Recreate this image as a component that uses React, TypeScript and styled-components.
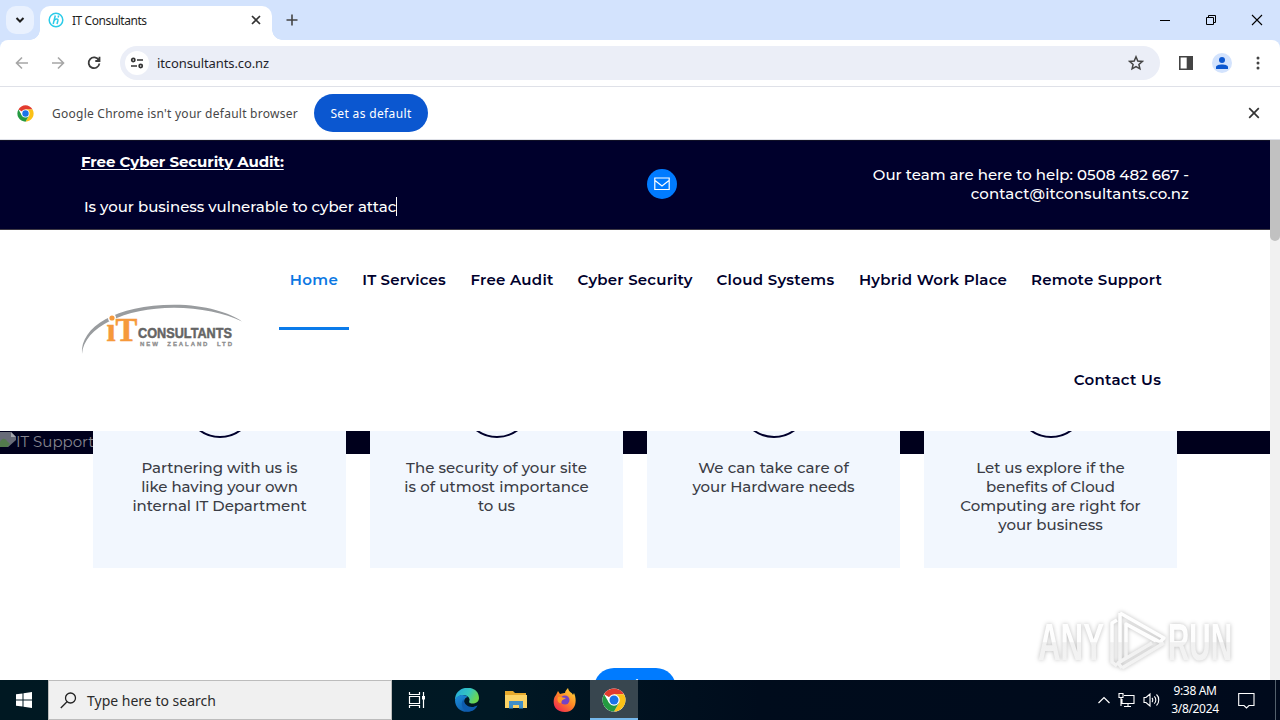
import React from "react";
import styled, { createGlobalStyle } from "styled-components";

const Global = createGlobalStyle`
  * { box-sizing: border-box; }
  html, body { margin: 0; padding: 0; }
  body { width: 1280px; height: 720px; overflow: hidden; background: #fff; }
  svg { display: block; flex: none; }
`;
const ui = `"Noto Sans", "Open Sans", sans-serif`;
const site = `"Montserrat", Inter, sans-serif`;

const Desktop = styled.div`
  width: 1280px; height: 720px; display: flex; flex-direction: column; overflow: hidden; background: #d3e3fd;
`;

/* Text run with its own tracking */
const Run = styled.span<{ $ls?: number }>`
  letter-spacing: ${(p) => p.$ls ?? 0}px; white-space: pre;
`;

/* Browser chrome */
const TabStrip = styled.div`
  height: 40px; flex: none; background: #d3e3fd; display: flex; align-items: flex-start; font-family: ${ui};
`;
const TabSearch = styled.div`
  width: 28px; height: 28px; margin: 6px 6px 0; border-radius: 10px; background: #e9f1fe;
  display: flex; align-items: center; justify-content: center;
`;
const Tab = styled.div`
  width: 232px; height: 34px; margin-top: 6px; padding: 0 11px 6px 8px; border-radius: 10px 10px 0 0; background: #fff;
  display: flex; align-items: center; font-size: 12px; color: #1f1f1f; position: relative;
  &::before, &::after { content: ""; position: absolute; bottom: 0; width: 10px; height: 10px; }
  &::before { left: -10px; background: radial-gradient(circle at 0 0, transparent 9.5px, #fff 10px); }
  &::after { right: -10px; background: radial-gradient(circle at 100% 0, transparent 9.5px, #fff 10px); }
`;
const TabTitle = styled.div`flex: 1; padding-left: 8px;`;
const NewTab = styled.div`margin: 13px 0 0 13px;`;
const WindowButtons = styled.div`
  margin-left: auto; height: 40px; display: flex; align-items: center; gap: 34px; padding-right: 17px;
`;
const Toolbar = styled.div`
  height: 47px; flex: none; background: #fff; border-bottom: 1px solid #dfe1e8; display: flex; align-items: center;
  padding: 0 14px; font-family: ${ui}; border-radius: 8px 8px 0 0;
`;
const NavButtons = styled.div`display: flex; gap: 20px; width: 106px; flex: none;`;
const AddressBar = styled.div`
  width: 1040px; height: 34px; border-radius: 17px; background: #ebeef7; display: flex; align-items: center;
  padding: 0 16px 0 5px; font-size: 13px; color: #1f1f2b;
`;
const SiteInfo = styled.div`
  width: 24px; height: 24px; border-radius: 50%; background: #fff; display: flex; align-items: center; justify-content: center;
`;
const Url = styled.div`flex: 1; padding-left: 8px;`;
const ToolbarActions = styled.div`flex: 1; display: flex; justify-content: flex-end; align-items: center; gap: 18px;`;
const Avatar = styled.div`
  width: 20px; height: 20px; border-radius: 50%; background: #d3e3fd; display: flex; align-items: center; justify-content: center;
`;
const InfoBar = styled.div`
  height: 53px; flex: none; background: #fff; border-bottom: 1px solid #dfe1e8; display: flex; align-items: center;
  padding: 0 20px 0 17px; font: 12px ${ui}; color: #474747;
`;
const InfoText = styled.div`width: 280px; padding-left: 18px;`;
const DefaultButton = styled.div`
  width: 114px; height: 38px; border-radius: 19px; background: #0b57d0; color: #fff; display: flex; align-items: center;
  justify-content: center;
`;
const InfoClose = styled.div`margin-left: auto;`;

/* Web page */
const Viewport = styled.div`height: 540px; flex: none; display: flex; overflow: hidden; font-family: ${site};`;
const Page = styled.main`width: 1270px; height: 540px; overflow: hidden; background: #fff; position: relative;`;
const Scrollbar = styled.div`width: 10px; background: #f1f1f1;`;
const Thumb = styled.div`height: 101px; background: #c1c1c1; border-radius: 0 0 5px 5px;`;
const TopBar = styled.div`
  height: 90px; background: #00002c; border-top: 1px solid #101026; border-bottom: 1px solid #3d3944; color: #fff;
  font-size: 15px; font-weight: 500; display: grid; grid-template-columns: 567px 30px 1fr; padding: 0 81px;
`;
const Audit = styled.div`padding-top: 11px; line-height: 20px;`;
const AuditTitle = styled.div`font-weight: 700; text-decoration: underline; text-decoration-thickness: 1px; text-underline-offset: 2px;`;
const AuditLine = styled.div`margin-top: 25px; padding-left: 3px; display: flex;`;
const Caret = styled.i`width: 1px; height: 19px; background: #fff;`;
const MailButton = styled.div`
  width: 30px; height: 30px; margin: 28px 0 0 -1px; border-radius: 50%; background: #007bff; display: flex; align-items: center; justify-content: center;
`;
const Contact = styled.div`padding-top: 24px; text-align: right; line-height: 19px;`;
const Header = styled.header`height: 201px; background: #fff; display: flex; padding-left: 80px;`;
const Logo = styled.div`width: 199px; padding-top: 70px;`;
const Menu = styled.nav`width: 895px; display: flex; flex-wrap: wrap; justify-content: flex-end; align-content: flex-start;`;
const MenuItem = styled.a<{ $w: number; $active?: boolean }>`
  width: ${(p) => p.$w}px; height: 100px; line-height: 100px; text-align: center; font-size: 15px; font-weight: 600;
  color: ${(p) => (p.$active ? "#0b78e3" : "#00002c")}; display: flex; flex-direction: column; padding-right: 1px;
`;
const Underline = styled.i`height: 3px; margin: -3px 0 0; background: #0b7bea;`;
const Hero = styled.div`
  height: 23px; background: #00001c; color: #85858f; font-size: 15px; line-height: 22px; display: flex; align-items: flex-start;
`;
const Cards = styled.div`
  display: grid; grid-template-columns: repeat(4, 253px); column-gap: 24px; margin: -23px 0 0 93px; position: relative;
`;
const Card = styled.section`
  height: 137px; background: #f2f7fe; overflow: hidden; display: flex; flex-direction: column; align-items: center;
  color: #3a3c45; font-size: 15px; font-weight: 500; line-height: 19px; text-align: center;
`;
const Ring = styled.div`
  width: 70px; height: 70px; flex: none; border: 2px solid #00002c; border-radius: 50%; margin: -63px 0 20px;
`;
const CallToAction = styled.div`
  width: 82px; height: 40px; margin: 100px auto 0; border-radius: 20px; background: #007bff; color: #fff; font-size: 15px;
  font-weight: 500; text-align: center; line-height: 34px;
`;
const Watermark = styled.div`
  position: absolute; left: 1034px; top: 466px;
  svg { overflow: visible; filter: drop-shadow(0 0 2px rgba(0, 0, 0, 0.26)); }
`;

/* Taskbar */
const Taskbar = styled.div`
  height: 40px; flex: none; display: flex; font-family: ${ui};
  background: linear-gradient(90deg, #001822 0, #001824 500px, #000c1c 760px, #000a1c 1280px);
`;
const Start = styled.div`width: 48px; display: flex; align-items: center; justify-content: center;`;
const SearchBox = styled.div`
  width: 344px; background: #f0f0f0; border: 1px solid #bcbcbc; display: flex; align-items: center; padding-left: 11px;
  font-size: 14px; color: #2b2b2b; gap: 10px;
`;
const AppButton = styled.div<{ $active?: boolean }>`
  width: ${(p) => (p.$active ? 48 : 49)}px; display: flex; align-items: center; justify-content: center;
  background: ${(p) => (p.$active ? "#38464f" : "transparent")}; margin-left: ${(p) => (p.$active ? 1 : 0)}px;
  border-bottom: ${(p) => (p.$active ? "2px solid #76b9ed" : "none")}; padding-top: ${(p) => (p.$active ? 2 : 0)}px;
  &:nth-child(3) { margin-right: 1px; }
`;
const Tray = styled.div`margin-left: auto; display: flex; align-items: center; color: #fff;`;
const TrayIcons = styled.div`display: flex; align-items: center; gap: 8px;`;
const Clock = styled.div`width: 70px; font-size: 12px; line-height: 18px; text-align: center; margin-right: 8px;`;
const ShowDesktop = styled.i`width: 5px; height: 40px; margin-left: 20px; border-left: 1px solid #53606c;`;

const ChromeLogo = ({ size }: { size: number }) => (
  <svg width={size} height={size} viewBox="0 0 48 48">
    <circle cx="24" cy="24" r="23" fill="#fff" />
    <path d="M24 24L4.1 12.5A23 23 0 0 1 43.9 12.5H24Z" fill="#e33b2e" />
    <path d="M43.9 12.5A23 23 0 0 1 24 47L34 29.7 24 12.5Z" fill="#fbc116" />
    <path d="M4.1 12.5A23 23 0 0 0 24 47L34 29.7 14 29.7Z" fill="#249a41" />
    <circle cx="24" cy="24" r="11.5" fill="#fff" />
    <circle cx="24" cy="24" r="9" fill="#1a73e8" />
  </svg>
);
const Cross = ({ size, w }: { size: number; w: number }) => (
  <svg width={size} height={size} viewBox="0 0 10 10" stroke="#333" strokeWidth={w}><path d="M1 1L9 9M9 1L1 9" /></svg>
);

const menu: { t: string; w: number; ls: number; active?: boolean }[] = [
  { t: "Home", w: 71, ls: 0.4, active: true },
  { t: "IT Services", w: 109, ls: 0.15 },
  { t: "Free Audit", w: 107, ls: 0.25 },
  { t: "Cyber Security", w: 139, ls: 0.2 },
  { t: "Cloud Systems", w: 142, ls: 0.3 },
  { t: "Hybrid Work Place", w: 173, ls: 0.22 },
  { t: "Remote Support", w: 154, ls: 0.2 },
  { t: "Contact Us", w: 112, ls: 0.3 },
];
const cards: [string, number][][] = [
  [["Partnering with us is", -0.1], ["like having your own", -0.05], ["internal IT Department", -0.05]],
  [["The security of your site", 0.05], ["is of utmost importance", 0.06], ["to us", 0]],
  [["We can take care of", 0.05], ["your Hardware needs", -0.05]],
  [["Let us explore if the", -0.05], ["benefits of Cloud", -0.05], ["Computing are right for", -0.04], ["your business", 0]],
];

export default function App() {
  return (
    <Desktop>
      <Global />
      <TabStrip>
        <TabSearch>
          <svg width="10" height="10" viewBox="0 0 10 10" fill="none" stroke="#1f1f1f" strokeWidth="2"><path d="M1.5 3L5 6.5 8.500 3" /></svg>
        </TabSearch>
        <Tab>
          <svg width="16" height="16" viewBox="0 0 16 16" fill="none" stroke="#2ccbe8">
            <circle cx="8" cy="8" r="6.800" strokeWidth="1.500" />
            <path d="M7.300 3.500L5.200 12M6.200 8.600C7.500 6.800 10.300 6.300 9.900 8.500L9 12M10.600 3.500L10.200 5.500" strokeWidth="1.500" />
          </svg>
          <TabTitle><Run $ls={-0.45}>IT Consultants</Run></TabTitle>
          <Cross size={10} w={1.700} />
        </Tab>
        <NewTab><svg width="14" height="14" viewBox="0 0 14 14" stroke="#444" strokeWidth="1.600"><path d="M7 1.500V12.500M1.500 7H12.500" /></svg></NewTab>
        <WindowButtons>
          <svg width="12" height="12" viewBox="0 0 12 12" stroke="#000"><path d="M1 6.500H11" /></svg>
          <svg width="12" height="12" viewBox="0 0 12 12" fill="none" stroke="#000"><path d="M1.500 3.500H8.500V10.500H1.500ZM3.500 3.500V1.500H10.500V8.500H8.500" /></svg>
          <svg width="12" height="12" viewBox="0 0 12 12" stroke="#000" strokeWidth="1.100"><path d="M1 1L11 11M11 1L1 11" /></svg>
        </WindowButtons>
      </TabStrip>
      <Toolbar>
        <NavButtons>
          <svg width="16" height="16" viewBox="0 0 16 16" fill="none" stroke="#a6a6a6" strokeWidth="1.600"><path d="M14 8H3M8 2.500L2.500 8 8 13.500" /></svg>
          <svg width="16" height="16" viewBox="0 0 16 16" fill="none" stroke="#a6a6a6" strokeWidth="1.600"><path d="M2 8H13M8 2.500L13.500 8 8 13.500" /></svg>
          <svg width="16" height="16" viewBox="0 0 16 16" fill="none" stroke="#3c3c3c" strokeWidth="1.800"><path d="M12.800 5.200A5.400 5.400 0 1 0 13.400 8.500M13.500 1.800V6H9.300" /></svg>
        </NavButtons>
        <AddressBar>
          <SiteInfo>
            <svg width="14" height="12" viewBox="0 0 14 12" fill="none" stroke="#333" strokeWidth="1.700"><circle cx="3.300" cy="3" r="1.600" /><path d="M7 3H13M1 9H7" /><circle cx="10.700" cy="9" r="1.600" /></svg>
          </SiteInfo>
          <Url><Run $ls={-0.1}>itconsultants.co.nz</Run></Url>
          <svg width="16" height="16" viewBox="0 0 16 16" fill="none" stroke="#444" strokeWidth="1.500"><path d="M8 1.800L9.800 6 14.300 6.400 10.900 9.400 11.900 13.800 8 11.500 4.100 13.800 5.100 9.400 1.700 6.400 6.200 6Z" /></svg>
        </AddressBar>
        <ToolbarActions>
          <svg width="16" height="16" viewBox="0 0 16 16" fill="none" stroke="#444" strokeWidth="1.600"><path d="M1.800 1.800H14.200V14.200H1.800Z" /><path d="M9.500 1.800H14.200V14.200H9.500Z" fill="#444" /></svg>
          <Avatar><svg width="14" height="14" viewBox="0 0 14 14" fill="#0b57d0"><circle cx="7" cy="4" r="3" /><path d="M1 13V11C1 7.500 13 7.500 13 11V13Z" /></svg></Avatar>
          <svg width="16" height="16" viewBox="0 0 16 16" fill="#444"><circle cx="8" cy="3" r="1.500" /><circle cx="8" cy="8" r="1.500" /><circle cx="8" cy="13" r="1.500" /></svg>
        </ToolbarActions>
      </Toolbar>
      <InfoBar>
        <ChromeLogo size={17} />
        <InfoText><Run $ls={0.25}>Google Chrome isn't your default browser</Run></InfoText>
        <DefaultButton><Run $ls={0.35}>Set as default</Run></DefaultButton>
        <InfoClose><Cross size={12} w={1.400} /></InfoClose>
      </InfoBar>
      <Viewport>
        <Page>
          <TopBar>
            <Audit>
              <AuditTitle><Run $ls={-0.08}>Free Cyber Security Audit:</Run></AuditTitle>
              <AuditLine><Run $ls={-0.03}>Is your business vulnerable to cyber attac</Run><Caret /></AuditLine>
            </Audit>
            <MailButton>
              <svg width="16" height="14" viewBox="0 0 16 14" fill="none" stroke="#fff" strokeWidth="1.200"><path d="M.8 1H15.200V12.500H.8ZM1 3.500L8 9 15 3.500" /></svg>
            </MailButton>
            <Contact>
              <div><Run $ls={0}>Our team are here to help: 0508 482 667 -</Run></div>
              <div><Run $ls={0.13}>contact@itconsultants.co.nz</Run></div>
            </Contact>
          </TopBar>
          <Header>
            <Logo>
              <svg width="164" height="58" viewBox="0 0 164 58">
                <path d="M2 54C0 27 36 5 94 4.800C126 4.800 150 13 162 21.500C145 13 120 8 94 7.800C45 8 4 27 2 54Z" fill="#999c9f" />
                <circle cx="32" cy="18" r="4" fill="#fff" /><circle cx="32" cy="18" r="2.600" fill="#f6993b" />
                <text x="26.500" y="41" fill="#f6993b" stroke="#f6993b" strokeWidth=".5" fontFamily="Liberation Serif, serif" fontWeight="700" fontSize="33" textLength="31" lengthAdjust="spacingAndGlyphs">ıT</text>
                <text x="58" y="38" fill="#656565" stroke="#656565" strokeWidth=".5" fontFamily="Liberation Sans, sans-serif" fontWeight="700" fontSize="15" textLength="94" lengthAdjust="spacingAndGlyphs">CONSULTANTS</text>
                <text x="60" y="46" fill="#8e8e8e" stroke="#8e8e8e" strokeWidth=".3" fontFamily="Liberation Sans, sans-serif" fontWeight="700" fontSize="6" wordSpacing="4" textLength="92">NEW ZEALAND LTD</text>
              </svg>
            </Logo>
            <Menu>
              {menu.map((m) => (
                <MenuItem key={m.t} $w={m.w} $active={m.active}>
                  <Run $ls={m.ls}>{m.t}</Run>
                  {m.active && <Underline />}
                </MenuItem>
              ))}
            </Menu>
          </Header>
          <Hero>
            <svg width="16" height="17" viewBox="0 0 16 17"><path d="M0 1H11L16 6V16H0Z" fill="#686b78" /><path d="M0 16V11C2 7 5 7 7 10L10 13L7 16Z" fill="#527a4c" /><path d="M7 17L16 9V17Z" fill="#00001c" /><path d="M11 1V6H16Z" fill="#a5a7ae" /></svg>
            <Run $ls={0}>IT Support</Run>
          </Hero>
          <Cards>
            {cards.map((c) => (
              <Card key={c[0][0]}>
                <Ring />
                {c.map(([t, ls]) => <Run key={t} $ls={ls}>{t}</Run>)}
              </Card>
            ))}
          </Cards>
          <CallToAction>Explore</CallToAction>
          <Watermark>
            <svg width="204" height="70" viewBox="0 0 204 70" fill="none">
              <defs>
                <linearGradient id="mark" gradientUnits="userSpaceOnUse" x1="0" y1="5" x2="0" y2="66">
                  <stop offset="0" stopColor="#fff" /><stop offset=".5" stopColor="#fdfdfd" /><stop offset=".52" stopColor="#f1f1f1" /><stop offset="1" stopColor="#f4f4f4" />
                </linearGradient>
              </defs>
              <g stroke="url(#mark)" strokeWidth="3.500" strokeLinejoin="round">
                <path d="M83 14L78 17V56L83 60M86 7V56L92 52V18L122 35M86 7L130 32L126 36L92 18M88 62L130 37M88 62L84 57L118 37" />
              </g>
              <g fill="url(#mark)" fontFamily="Liberation Sans, sans-serif" fontWeight="700" fontSize="52">
                <text x="4" y="54" textLength="66" lengthAdjust="spacingAndGlyphs">ANY</text>
                <text x="134" y="54" textLength="64" lengthAdjust="spacingAndGlyphs">RUN</text>
              </g>
            </svg>
          </Watermark>
        </Page>
        <Scrollbar><Thumb /></Scrollbar>
      </Viewport>
      <Taskbar>
        <Start><svg width="16" height="16" viewBox="0 0 16 16" fill="#fff"><path d="M0 2.300L6.500 1.400V7.500H0ZM7.500 1.200L16 0V7.500H7.500ZM0 8.500H6.500V14.600L0 13.700ZM7.500 8.500H16V16L7.500 14.800Z" /></svg></Start>
        <SearchBox>
          <svg width="17" height="17" viewBox="0 0 17 17" fill="none" stroke="#222" strokeWidth="1.300"><circle cx="10.500" cy="6" r="5" /><path d="M7 9.800L.8 16" /></svg>
          <Run>Type here to search</Run>
        </SearchBox>
        <AppButton>
          <svg width="18" height="18" viewBox="0 0 18 18" fill="none" stroke="#fff" strokeWidth="1.200"><path d="M1.500 1V3.500H11.500V1M1.500 17V14.500H11.500V17M1.500 5.500H11.500V12.500H1.500ZM15.500 1V17" /><path d="M14 5H17V8.500H14Z" fill="#fff" stroke="none" /></svg>
        </AppButton>
        <AppButton>
          <svg width="24" height="24" viewBox="0 0 24 24">
            <defs>
              <linearGradient id="edgeTop" x1="0" y1="0" x2="1" y2="0.400"><stop offset="0" stopColor="#22a7dd" /><stop offset=".6" stopColor="#35c6c0" /><stop offset="1" stopColor="#6bd651" /></linearGradient>
              <linearGradient id="edgeLow" x1="0" y1="0" x2="1" y2="1"><stop offset="0" stopColor="#1c8fdc" /><stop offset="1" stopColor="#0c4a99" /></linearGradient>
            </defs>
            <path d="M0 12C0-4 24-4 24 10C24 15 18 16.500 15 15C13 14 15 13 14.500 11C13 6 4 5 0 12Z" fill="url(#edgeTop)" />
            <path d="M0 12C2 6 10 6 13 9C8 9 7 19 15 19.500C18 20 21 18 22.500 17.500C16 28 0 25 0 12Z" fill="url(#edgeLow)" />
            <path d="M8.500 11C4 17 9 24 14 23.500C18 23.500 21 20.500 22.500 17.500C16 21 9 18 8.500 11Z" fill="#0e5cae" />
          </svg>
        </AppButton>
        <AppButton>
          <svg width="22" height="20" viewBox="0 0 22 20"><path d="M0 1H8L10 3H21V18H0Z" fill="#e6a92c" /><path d="M0 5H22V18H0Z" fill="#fbd365" /><path d="M4 11H18V18.500H14V15H8V18.500H4Z" fill="#3f8fc9" /></svg>
        </AppButton>
        <AppButton>
          <svg width="24" height="24" viewBox="0 0 24 24">
            <defs><linearGradient id="fox" x1="1" y1="0" x2="0.200" y2="1"><stop offset="0" stopColor="#ffe53f" /><stop offset=".5" stopColor="#ff8a25" /><stop offset="1" stopColor="#f0264f" /></linearGradient></defs>
            <path d="M5 3L7 6C10 5 11 5 12 5C12 3 14 1 15 0C16 5 19 4 20 7L21 5C24 11 24 24 12 24C-1 24-1 11 3 7Z" fill="url(#fox)" />
            <circle cx="12" cy="12" r="4.500" fill="#7543c5" /><path d="M5 9C8 8 10 10 13 10C11 12 9 11 8.500 14C8 17 3 14 5 9Z" fill="#ff9b28" />
          </svg>
        </AppButton>
        <AppButton $active><ChromeLogo size={24} /></AppButton>
        <Tray>
          <TrayIcons>
            <svg width="12" height="8" viewBox="0 0 12 8" fill="none" stroke="#fff" strokeWidth="1.200"><path d="M.5 7L6 1.500 11.500 7" /></svg>
            <svg width="17" height="16" viewBox="0 0 17 16" fill="none" stroke="#fff" strokeWidth="1.100"><path d="M6 3.500H16V11.500H4V7M10 11.500V14.500M6 14.500H13M1 1.500H5V5.500H1ZM3 5.500V14" /></svg>
            <svg width="17" height="16" viewBox="0 0 17 16" fill="none" stroke="#fff" strokeWidth="1.100"><path d="M1 5.500H3L7 2V14L3 10.500H1ZM9 6C10 7 10 9 9 10M11.300 4.300C13.300 6 13.300 10 11.300 11.700M13.500 2.500C16.500 5 16.500 11 13.500 13.500" /></svg>
          </TrayIcons>
          <Clock><Run $ls={-0.35}>9:38 AM</Run><br /><Run $ls={-0.35}>3/8/2024</Run></Clock>
          <svg width="17" height="17" viewBox="0 0 17 17" fill="none" stroke="#fff" strokeWidth="1.100"><path d="M.7 1.500H16V13.500H11L8.500 16 6 13.500H.7Z" /></svg>
          <ShowDesktop />
        </Tray>
      </Taskbar>
    </Desktop>
  );
}
